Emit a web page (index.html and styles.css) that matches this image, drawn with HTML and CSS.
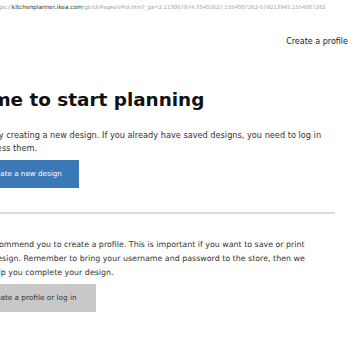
FILE: index.html
```html
<!DOCTYPE html>
<html>
<head>
<meta charset="utf-8">
<link rel="stylesheet" href="styles.css">
</head>
<body>
<div class="urlbar"><span class="scheme">https://</span><span class="host">kitchenplanner.ikea.com</span><span class="path">/gb/UI/Pages/VPUI.htm?_ga=2.113067974.33401627.1554007262-579213945.1554007262</span></div>
<div class="topbar"><a class="toplink">Create a profile</a></div>
<div class="main">
  <h1 class="title">Welcome to start planning</h1>
  <p class="intro">Start by creating a new design. If you already have saved designs, you need to log in<br>to access them.</p>
  <a class="btn btn-blue">Create a new design</a>
  <div class="divider"></div>
  <p class="recommend">We recommend you to create a profile. This is important if you want to save or print<br>your design. Remember to bring your username and password to the store, then we<br>can help you complete your design.</p>
  <a class="btn btn-gray">Create a profile or log in</a>
</div>
</body>
</html>
```
FILE: styles.css
```css
html, body {
  margin: 0;
  padding: 0;
  background: #fff;
}
body {
  width: 348px;
  height: 348px;
  overflow: hidden;
  font-family: "DejaVu Sans", Verdana, sans-serif;
  color: #333;
}
.urlbar {
  height: 14px;
  line-height: 14px;
  font-size: 5.8px;
  color: #a0a0a0;
  white-space: nowrap;
  margin-left: -9px;
}
.urlbar .host {
  color: #333;
}
.urlbar .path {
  font-size: 5.3px;
}
.topbar {
  display: flex;
  justify-content: flex-end;
  margin-top: 21px;
  height: 13px;
  line-height: 13px;
  font-size: 8px;
  white-space: nowrap;
}
.toplink {
  color: #222;
}
.main {
  margin-left: -28px;
  white-space: nowrap;
}
.title {
  margin: 41px 0 0;
  font-size: 18.4px;
  line-height: 22px;
  font-weight: bold;
  color: #111;
  text-indent: -42.5px;
}
.intro {
  margin: 18px 0 0;
  font-size: 8.2px;
  line-height: 13px;
  text-indent: -1px;
}
.btn {
  display: inline-block;
  height: 28px;
  line-height: 28px;
  padding: 0 17px 0 16px;
  font-size: 7.2px;
}
.btn-blue {
  margin-top: 5px;
  background: #3a78b8;
  color: #fff;
}
.divider {
  margin-top: 24px;
  width: 363px;
  height: 2px;
  background: #dcdcdc;
}
.recommend {
  margin: 24px 0 0;
  font-size: 7.9px;
  line-height: 14px;
}
.btn-gray {
  margin-top: 4px;
  padding-right: 19px;
  font-size: 7.3px;
  background: #c8c8c8;
  color: #333;
}
```
